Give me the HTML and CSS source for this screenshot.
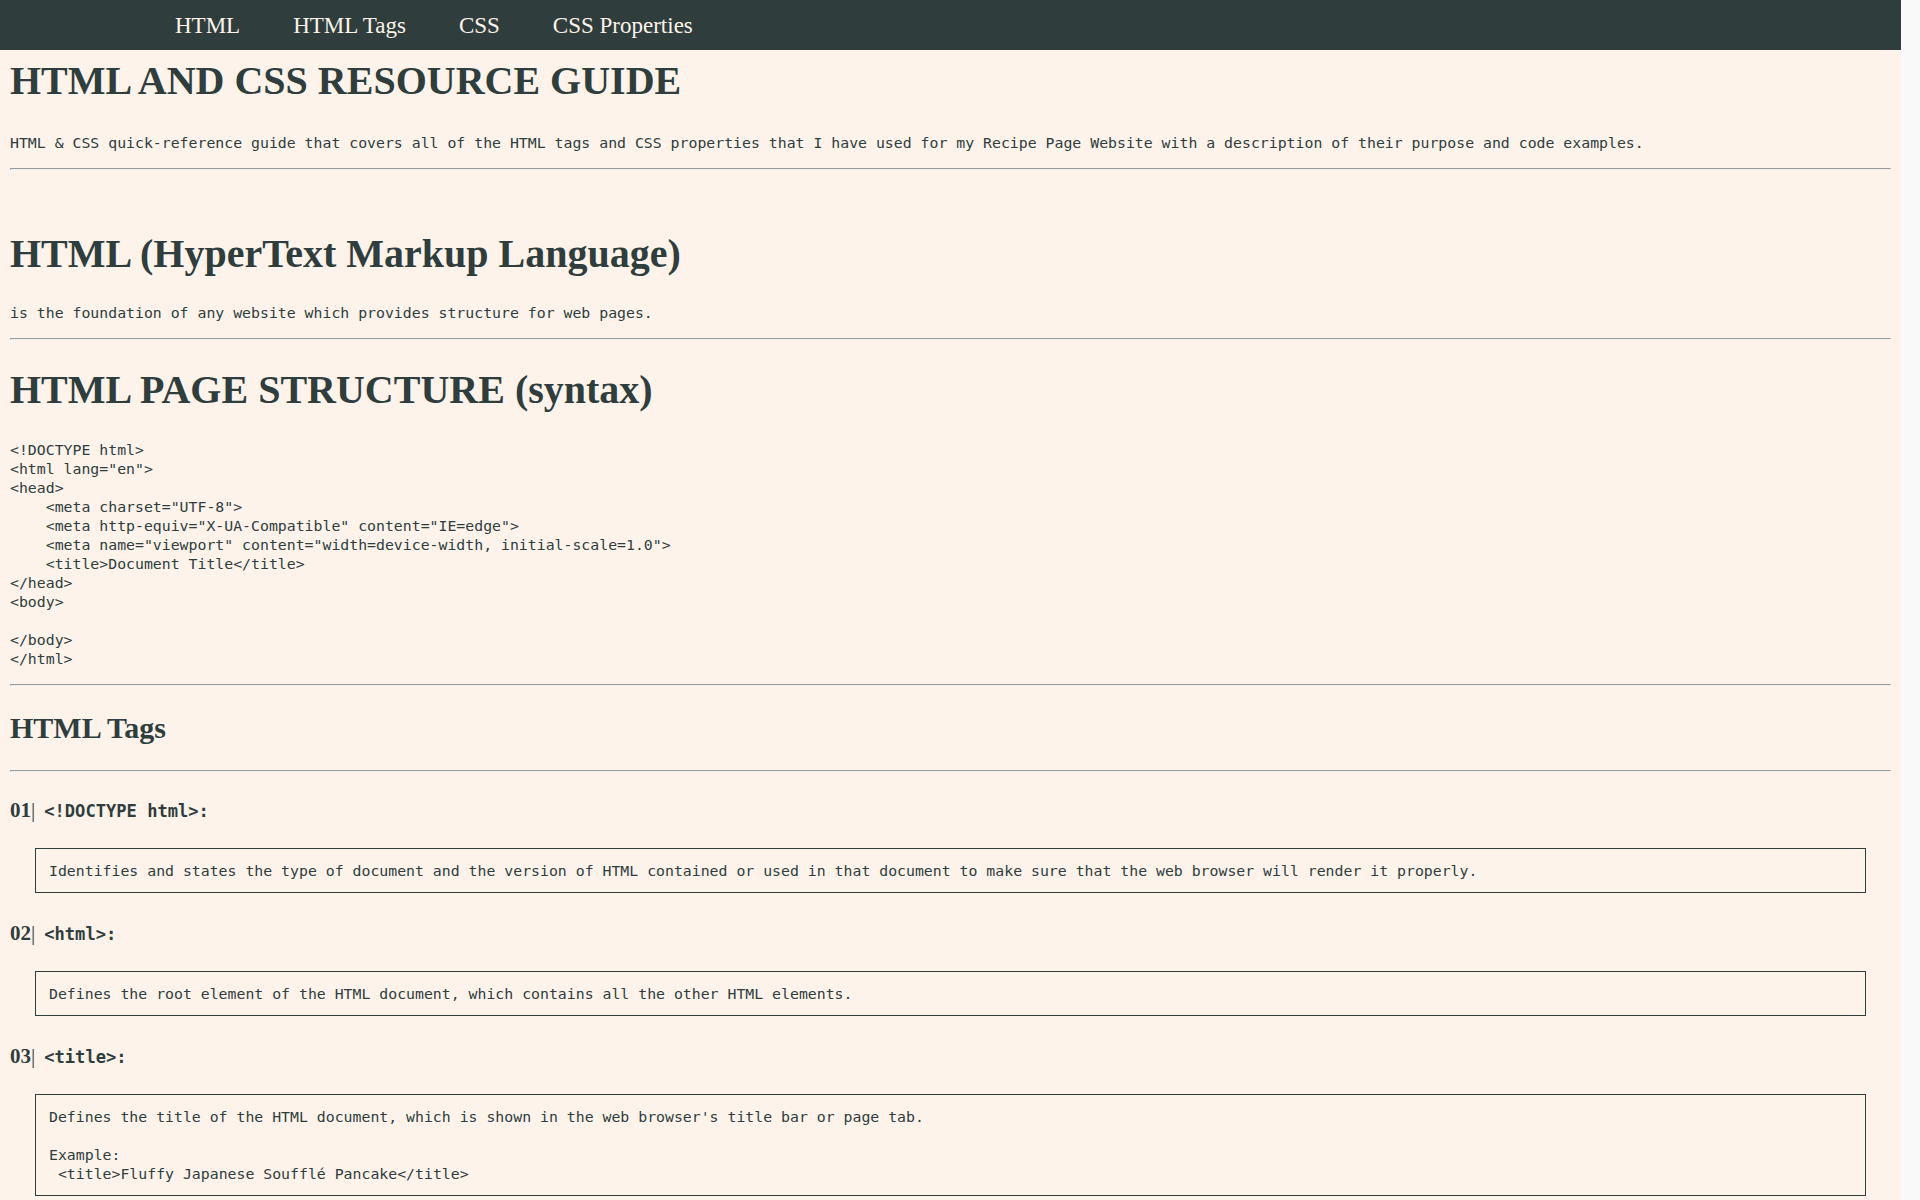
FILE: index.html
```html
<!DOCTYPE html>
<html lang="en">
<head>
<meta charset="UTF-8">
<meta name="viewport" content="width=device-width, initial-scale=1.0">
<title>HTML and CSS Resource Guide</title>
<link rel="stylesheet" href="styles.css">
</head>
<body>
<nav class="topnav">
  <a class="topnav__link" href="#html">HTML</a>
  <a class="topnav__link" href="#html-tags">HTML Tags</a>
  <a class="topnav__link" href="#css">CSS</a>
  <a class="topnav__link" href="#css-properties">CSS Properties</a>
</nav>
<main class="guide">
  <h1 class="guide__title guide__title--main">HTML AND CSS RESOURCE GUIDE</h1>
  <p class="guide__text">HTML &amp; CSS quick-reference guide that covers all of the HTML tags and CSS properties that I have used for my Recipe Page Website with a description of their purpose and code examples.</p>
  <hr class="rule">

  <section class="chapter" id="html">
    <h1 class="guide__title">HTML (HyperText Markup Language)</h1>
    <p class="guide__text">is the foundation of any website which provides structure for web pages.</p>
    <hr class="rule">
    <h1 class="guide__title">HTML PAGE STRUCTURE (syntax)</h1>
<pre class="code">&lt;!DOCTYPE html&gt;
&lt;html lang="en"&gt;
&lt;head&gt;
    &lt;meta charset="UTF-8"&gt;
    &lt;meta http-equiv="X-UA-Compatible" content="IE=edge"&gt;
    &lt;meta name="viewport" content="width=device-width, initial-scale=1.0"&gt;
    &lt;title&gt;Document Title&lt;/title&gt;
&lt;/head&gt;
&lt;body&gt;

&lt;/body&gt;
&lt;/html&gt;</pre>
    <hr class="rule">
  </section>

  <section id="html-tags">
    <h2 class="guide__subtitle">HTML Tags</h2>
    <hr class="rule">

    <h3 class="entry__title"><span class="entry__num">01</span><span class="entry__bar">|</span><code class="entry__tag">&lt;!DOCTYPE html&gt;:</code></h3>
<pre class="entry__box">Identifies and states the type of document and the version of HTML contained or used in that document to make sure that the web browser will render it properly.</pre>

    <h3 class="entry__title"><span class="entry__num">02</span><span class="entry__bar">|</span><code class="entry__tag">&lt;html&gt;:</code></h3>
<pre class="entry__box">Defines the root element of the HTML document, which contains all the other HTML elements.</pre>

    <h3 class="entry__title"><span class="entry__num">03</span><span class="entry__bar">|</span><code class="entry__tag">&lt;title&gt;:</code></h3>
<pre class="entry__box entry__box--last">Defines the title of the HTML document, which is shown in the web browser's title bar or page tab.

Example:
 &lt;title&gt;Fluffy Japanese Soufflé Pancake&lt;/title&gt;</pre>
  </section>
</main>
</body>
</html>
```
FILE: styles.css
```css
html {
  background: #f9f9f9;
}

body {
  margin: 0 19px 0 0;
  background: #fdf3eb;
  color: #2f3d3d;
  font-family: "Liberation Serif", "Times New Roman", serif;
}

/* navigation */
.topnav {
  display: flex;
  align-items: center;
  gap: 53px;
  height: 50px;
  padding-left: 175px;
  background: #2f3d3d;
}

.topnav__link {
  padding-top: 1px;
  color: #fdf3eb;
  text-decoration: none;
  font-size: 23px;
  line-height: 26px;
}

/* content */
.guide {
  padding: 0 10px;
  overflow: hidden;
}

.guide__title {
  margin: 26.8px 0;
  font-size: 40px;
  line-height: 46px;
  font-weight: bold;
}

.guide__title--main {
  margin: 8px 0 28.8px;
}

.guide__subtitle {
  margin: 25px 0;
  font-size: 30px;
  line-height: 34.5px;
  font-weight: bold;
}

.guide__text {
  margin: 16px 0;
  font-family: "DejaVu Sans Mono", "Liberation Mono", monospace;
  font-size: 14.83px;
  line-height: 19px;
}

.rule {
  margin: 8px 0;
}

.chapter {
  padding-top: 26px;
}

.code {
  margin: 16px 0;
  font-family: "DejaVu Sans Mono", "Liberation Mono", monospace;
  font-size: 14.83px;
  line-height: 19px;
}

/* entries */
.entry__title {
  margin: 26px 0;
  font-size: 21px;
  line-height: 24px;
  font-weight: bold;
}

.entry__bar {
  font-weight: normal;
}

.entry__tag {
  margin-left: 9px;
  font-family: "DejaVu Sans Mono", "Liberation Mono", monospace;
  font-size: 17.1px;
  line-height: 1;
  font-weight: bold;
}

.entry__box {
  margin: 0 25px 28px;
  padding: 12px 13px;
  border: 1px solid #2f3d3d;
  font-family: "DejaVu Sans Mono", "Liberation Mono", monospace;
  font-size: 14.83px;
  line-height: 19px;
  white-space: pre-wrap;
}

.entry__box--last {
  margin-bottom: 4px;
}
```
